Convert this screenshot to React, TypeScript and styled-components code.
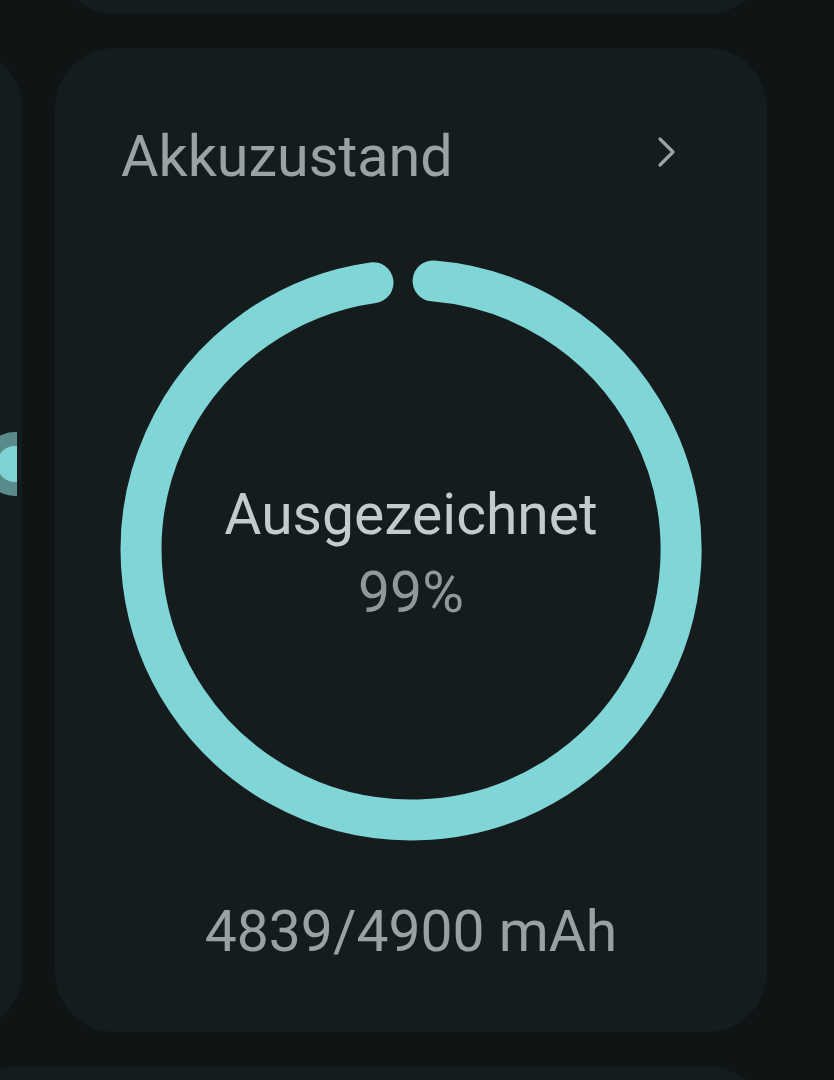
import styled, { createGlobalStyle } from "styled-components";

const GlobalStyle = createGlobalStyle`
  html, body {
    margin: 0;
    padding: 0;
    background: #0f1414;
    overflow: hidden;
  }
  body {
    font-family: Roboto, "Noto Sans", "Liberation Sans", sans-serif;
  }
`;

const RING_SIZE = 582;
const RING_RADIUS = 270;
const RING_STROKE = 41;

const polar = (deg: number) => {
  const rad = (deg * Math.PI) / 180;
  const c = RING_SIZE / 2;
  return {
    x: c + RING_RADIUS * Math.sin(rad),
    y: c - RING_RADIUS * Math.cos(rad),
  };
};

const arcPath = (startDeg: number, endDeg: number) => {
  const a = polar(startDeg);
  const b = polar(endDeg);
  const large = endDeg - startDeg > 180 ? 1 : 0;
  return `M ${a.x.toFixed(1)} ${a.y.toFixed(1)} A ${RING_RADIUS} ${RING_RADIUS} 0 ${large} 1 ${b.x.toFixed(1)} ${b.y.toFixed(1)}`;
};

const App = () => {
  return (
    <>
      <GlobalStyle />
      <Page>
        <TopCard />
        <Row>
          <SideCard>
            <KnobClip>
              <Knob>
                <KnobInner />
              </Knob>
            </KnobClip>
          </SideCard>
          <HealthCard>
            <CardHeader>
              <Title>Akkuzustand</Title>
              <Chevron width="20" height="32" viewBox="0 0 20 32">
                <polyline
                  points="3,3 16,16 3,29"
                  fill="none"
                  stroke="#9aa2a4"
                  strokeWidth="3.2"
                  strokeLinecap="round"
                  strokeLinejoin="round"
                />
              </Chevron>
            </CardHeader>
            <RingArea>
              <svg
                width={RING_SIZE}
                height={RING_SIZE}
                viewBox={`0 0 ${RING_SIZE} ${RING_SIZE}`}
              >
                <path
                  d={arcPath(4.7, 351.9)}
                  fill="none"
                  stroke="#80d5d7"
                  strokeWidth={RING_STROKE}
                  strokeLinecap="round"
                />
              </svg>
              <RingText>
                <StateLabel>Ausgezeichnet</StateLabel>
                <Percent>99%</Percent>
              </RingText>
            </RingArea>
            <Capacity>4839/4900 mAh</Capacity>
          </HealthCard>
        </Row>
        <BottomCard />
      </Page>
    </>
  );
};

const Page = styled.div`
  width: 834px;
  height: 1080px;
  overflow: hidden;
  display: flex;
  flex-direction: column;
  gap: 34px;
`;

const TopCard = styled.div`
  flex: none;
  width: 712px;
  height: 120px;
  margin-top: -106px;
  margin-left: 55px;
  border-radius: 60px;
  background: #151c1e;
`;

const Row = styled.div`
  flex: none;
  display: flex;
  gap: 33px;
`;

const SideCard = styled.div`
  position: relative;
  flex: none;
  width: 200px;
  height: 984px;
  margin-left: -178px;
  border-radius: 60px;
  background: #151c1e;
`;

const KnobClip = styled.div`
  position: absolute;
  right: 5px;
  top: 384px;
  width: 40px;
  height: 64px;
  overflow: hidden;
`;

const Knob = styled.div`
  position: absolute;
  left: 6px;
  top: 0;
  width: 64px;
  height: 64px;
  border-radius: 50%;
  background: #5a8b8c;
  display: flex;
  align-items: center;
  justify-content: center;
`;

const KnobInner = styled.div`
  width: 36px;
  height: 36px;
  border-radius: 50%;
  background: #7fd2d4;
`;

const HealthCard = styled.div`
  flex: none;
  width: 712px;
  height: 984px;
  box-sizing: border-box;
  padding-top: 80px;
  border-radius: 60px;
  background: #151c1e;
  display: flex;
  flex-direction: column;
  align-items: center;
`;

const CardHeader = styled.div`
  align-self: stretch;
  display: flex;
  align-items: center;
  justify-content: space-between;
  padding: 0 90px 0 66px;
`;

const Title = styled.div`
  font-size: 57.5px;
  line-height: 1;
  color: #9aa2a4;
`;

const Chevron = styled.svg`
  display: block;
  margin-top: -10px;
`;

const RingArea = styled.div`
  margin-top: 73px;
  display: grid;
  place-items: center;

  & > * {
    grid-area: 1 / 1;
  }
`;

const RingText = styled.div`
  margin-top: 7px;
  display: flex;
  flex-direction: column;
  align-items: center;
  gap: 21px;
`;

const StateLabel = styled.div`
  font-size: 57px;
  line-height: 1;
  color: #c4cbcd;
`;

const Percent = styled.div`
  font-size: 57px;
  line-height: 1;
  color: #8f989a;
`;

const Capacity = styled.div`
  margin-top: 62px;
  font-size: 57px;
  line-height: 1;
  color: #9aa1a3;
`;

const BottomCard = styled.div`
  flex: none;
  width: 807px;
  height: 200px;
  margin-left: -40px;
  border-radius: 60px;
  background: #151c1e;
`;

export default App;
